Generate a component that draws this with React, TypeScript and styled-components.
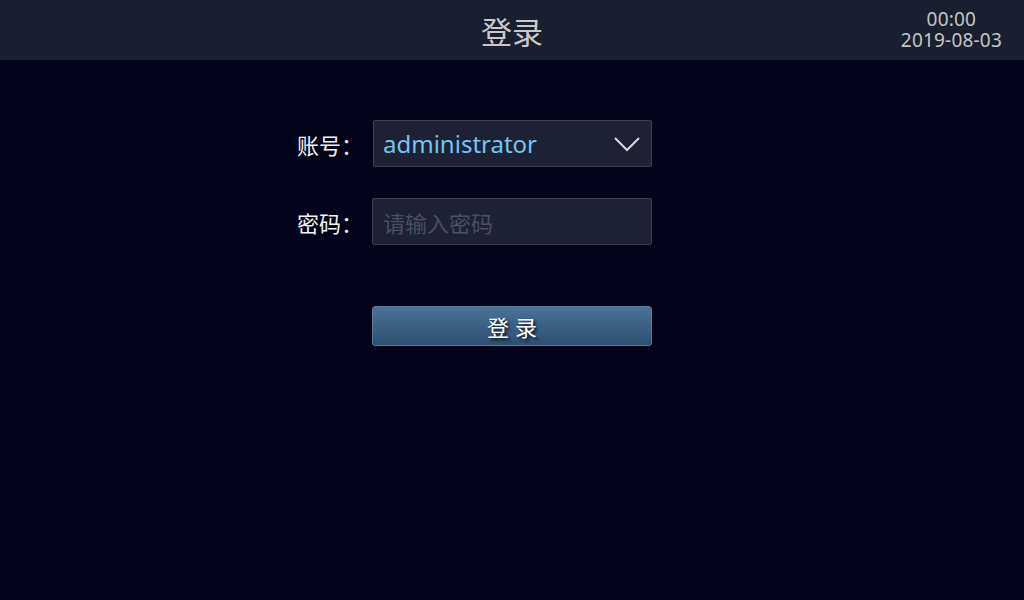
import React from "react";
import styled, { createGlobalStyle } from "styled-components";

const Global = createGlobalStyle`
  html, body { margin: 0; padding: 0; background: #03031a; }
  body { font-family: "Noto Sans", "Noto Sans CJK SC", sans-serif; }
  #root { width: 1024px; height: 600px; }
`;

const Page = styled.div`
  width: 1024px;
  height: 600px;
  background: #03031a;
  display: flex;
  flex-direction: column;
  overflow: hidden;
`;

const Header = styled.header`
  height: 60px;
  flex: none;
  background: #1a1f2f;
  display: grid;
  grid-template-columns: 1fr auto 1fr;
  align-items: center;
  padding: 0 22px 0 0;
`;

const Title = styled.h1`
  grid-column: 2;
  margin: 0;
  font-family: "Noto Sans CJK SC", sans-serif;
  font-weight: 400;
  font-size: 31px;
  line-height: 1;
  color: #c9c9c9;
  padding-left: 22px;
`;

const Clock = styled.div`
  grid-column: 3;
  justify-self: end;
  display: flex;
  flex-direction: column;
  align-items: center;
  font-family: "Noto Sans", sans-serif;
  font-size: 19px;
  line-height: 21px;
  color: #c4c4c4;
  padding-top: 0px;
  letter-spacing: 0.2px;
`;

const Form = styled.div`
  display: grid;
  grid-template-columns: 1fr 280px 1fr;
  row-gap: 31px;
  padding-top: 60px;
  align-items: center;
`;

const Label = styled.label`
  grid-column: 1;
  justify-self: end;
  padding-right: 9px;
  font-family: "Noto Sans CJK SC", sans-serif;
  font-size: 22px;
  color: #f2f2f2;
  line-height: 1;
`;

const Field = styled.div<{ $shift?: number }>`
  grid-column: 2;
  box-sizing: border-box;
  height: 47px;
  background: #1d2133;
  border: 1px solid #3b4152;
  border-radius: 2px;
  display: flex;
  align-items: center;
  padding: 0 10px 0 10px;
  margin-left: ${(p) => p.$shift ?? 0}px;
`;

const Value = styled.span`
  flex: 1;
  font-family: "Noto Sans", sans-serif;
  font-size: 24px;
  color: #72c6ef;
  line-height: 1;
  margin-left: -1px;
`;

const Placeholder = styled.span`
  flex: 1;
  font-family: "Noto Sans CJK SC", sans-serif;
  font-size: 22px;
  color: #4b4f5e;
  line-height: 1;
`;

const Chevron = styled.svg`
  width: 28px;
  height: 16px;
  flex: none;
`;

const ButtonRow = styled.div`
  grid-column: 2;
  padding-top: 30px;
`;

const LoginButton = styled.button`
  width: 280px;
  height: 40px;
  box-sizing: border-box;
  border: 1px solid #587a9c;
  border-radius: 3px;
  background: linear-gradient(to bottom, #4a7197 0%, #3a6185 50%, #2d4f70 100%);
  color: #ffffff;
  font-family: "Noto Sans CJK SC", sans-serif;
  font-size: 22px;
  letter-spacing: 6px;
  padding: 0 0 0 6px;
  text-shadow: 2px 2px 3px rgba(0, 0, 0, 0.8);
  cursor: pointer;
`;

export default function App() {
  return (
    <Page>
      <Global />
      <Header>
        <Title>登录</Title>
        <Clock>
          <span>00:00</span>
          <span>2019-08-03</span>
        </Clock>
      </Header>
      <Form>
        <Label>账号：</Label>
        <Field $shift={1}>
          <Value>administrator</Value>
          <Chevron viewBox="0 0 28 16">
            <polyline points="2,2 14,14 26,2" fill="none" stroke="#d8d8d8" strokeWidth="2" />
          </Chevron>
        </Field>
        <Label>密码：</Label>
        <Field>
          <Placeholder>请输入密码</Placeholder>
        </Field>
        <ButtonRow>
          <LoginButton>登录</LoginButton>
        </ButtonRow>
      </Form>
    </Page>
  );
}
